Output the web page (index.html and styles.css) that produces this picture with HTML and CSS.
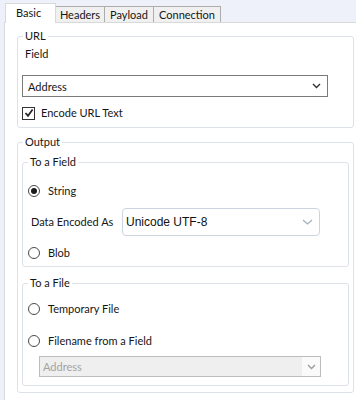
FILE: index.html
```html
<!DOCTYPE html>
<html lang="en">
<head>
    <meta charset="UTF-8">
    <title>Download - Basic</title>
    <link rel="stylesheet" href="styles.css">
</head>
<body>
    <div class="tabs">
        <div class="tab active">Basic</div>
        <div class="tab tab-headers">Headers</div>
        <div class="tab tab-payload">Payload</div>
        <div class="tab tab-connection">Connection</div>
    </div>

    <div class="panel">
        <fieldset class="group url-group">
            <legend>URL</legend>
            <div class="label field-label">Field</div>
            <div class="select select-address">
                <span>Address</span>
                <svg class="chevron" width="9" height="6" viewBox="0 0 9 6"><path d="M1 1 L4.5 4.5 L8 1" fill="none" stroke="#333" stroke-width="1.4"/></svg>
            </div>
            <div class="check-row">
                <span class="checkbox">
                    <svg width="10" height="10" viewBox="0 0 10 10"><path d="M1.5 5 L4 7.8 L8.6 1.6" fill="none" stroke="#222" stroke-width="1.7"/></svg>
                </span>
                <span class="label">Encode URL Text</span>
            </div>
        </fieldset>

        <fieldset class="group output-group">
            <legend>Output</legend>

            <fieldset class="group inner field-group">
                <legend>To a Field</legend>
                <div class="radio-row row-string">
                    <span class="radio checked"></span>
                    <span class="label">String</span>
                </div>
                <div class="encode-row">
                    <span class="label encode-label">Data Encoded As</span>
                    <div class="select select-flat">
                        <span>Unicode UTF-8</span>
                        <svg class="chevron" width="11" height="6" viewBox="0 0 11 6"><path d="M1 1 L5.5 5 L10 1" fill="none" stroke="#a4adbd" stroke-width="1.2"/></svg>
                    </div>
                </div>
                <div class="radio-row row-blob">
                    <span class="radio"></span>
                    <span class="label">Blob</span>
                </div>
            </fieldset>

            <fieldset class="group inner file-group">
                <legend>To a File</legend>
                <div class="radio-row row-temp">
                    <span class="radio"></span>
                    <span class="label">Temporary File</span>
                </div>
                <div class="radio-row row-filename">
                    <span class="radio"></span>
                    <span class="label">Filename from a Field</span>
                </div>
                <div class="select select-disabled">
                    <span class="disabled-text">Address</span>
                    <span class="disabled-button">
                        <svg width="9" height="6" viewBox="0 0 9 6"><path d="M1 1 L4.5 4.5 L8 1" fill="none" stroke="#9a9a9a" stroke-width="1.3"/></svg>
                    </span>
                </div>
            </fieldset>
        </fieldset>
    </div>
</body>
</html>
```

FILE: styles.css
```css
/* General Styles */
body {
    margin: 0;
    width: 356px;
    height: 400px;
    overflow: hidden;
    background: #eef1f9;
    font-family: Lato, 'Open Sans', sans-serif;
    font-size: 11px;
    color: #161616;
}

/* Tabs */
.tabs {
    display: flex;
    align-items: flex-end;
    padding: 3px 0 0 5px;
    height: 19px;
}

.tab {
    box-sizing: border-box;
    height: 16px;
    line-height: 15px;
    border: 1px solid #adadad;
    border-bottom: none;
    background: #f0f0f0;
    text-align: center;
    margin-left: -1px;
}

.tab.active {
    height: 20px;
    width: 51px;
    margin-left: 0;
    margin-bottom: -1px;
    position: relative;
    z-index: 1;
    background: #fff;
    border-color: #d9d9d9;
    line-height: 17px;
    text-align: left;
    padding-left: 10px;
}

.tab-headers { width: 50px; }
.tab-payload { width: 50px; }
.tab-connection { width: 68px; }

/* Panel */
.panel {
    box-sizing: border-box;
    width: 364px;
    height: 390px;
    margin-left: 4px;
    padding: 6px 0 0 12px;
    background: #fff;
    border: 1px solid #d9d9d9;
}

.group {
    box-sizing: border-box;
    width: 337px;
    margin: 0;
    padding: 0 4px;
    border: 1px solid #dde1e8;
    border-radius: 3px;
    min-width: 0;
}

.group legend {
    padding: 0 2px;
    margin-left: 1px;
    line-height: 14px;
}

.group.inner {
    width: 327px;
}

.label {
    line-height: 16px;
    white-space: nowrap;
}

/* URL */
.url-group {
    padding-bottom: 6px;
}

.field-label {
    margin-top: 3px;
    padding-left: 3px;
}

.select {
    box-sizing: border-box;
    display: flex;
    align-items: center;
    justify-content: space-between;
    background: #fff;
}

.select-address {
    width: 306px;
    height: 22px;
    margin-top: 13px;
    padding: 0 6px 0 5px;
    border: 1px solid #7a7a7a;
}

.check-row {
    display: flex;
    align-items: center;
    gap: 6px;
    margin-top: 8px;
}

.checkbox {
    box-sizing: border-box;
    width: 13px;
    height: 13px;
    border: 1px solid #333;
    display: flex;
    align-items: center;
    justify-content: center;
}

/* Output */
.output-group {
    margin-top: 7px;
    padding-bottom: 6px;
}

.field-group {
    margin-top: 6px;
    padding-bottom: 5px;
}

.file-group {
    margin-top: 9px;
    padding-bottom: 8px;
}

.radio-row {
    display: flex;
    align-items: center;
    gap: 8px;
}

.radio {
    box-sizing: border-box;
    width: 12px;
    height: 12px;
    border: 1px solid #4a4a4a;
    border-radius: 50%;
    display: flex;
    align-items: center;
    justify-content: center;
    margin-left: 1px;
}

.radio.checked::after {
    content: '';
    width: 6px;
    height: 6px;
    border-radius: 50%;
    background: #1b1b1b;
}

.row-string { margin-top: 14px; }
.row-blob { margin-top: 9px; }
.row-temp { margin-top: 11px; }
.row-filename { margin-top: 16px; }

.encode-row {
    display: grid;
    grid-template-columns: 95px 198px;
    align-items: center;
    margin-top: 9px;
}

.encode-label {
    padding-left: 4px;
    text-align: left;
}

.select-flat {
    height: 28px;
    padding: 0 6px 0 3px;
    border: 1px solid #ccd4e2;
    border-radius: 4px;
    font-family: 'Liberation Sans', Arial, sans-serif;
    font-size: 12px;
    color: #111;
}

.select-disabled {
    width: 282px;
    height: 21px;
    margin: 7px 0 0 12px;
    border: 1px solid #bdbdbd;
    background: #efefef;
    align-items: stretch;
}

.disabled-text {
    padding-left: 3px;
    line-height: 19px;
    color: #a3a3a3;
}

.disabled-button {
    width: 18px;
    display: flex;
    align-items: center;
    justify-content: center;
    background: #fafafa;
}
```
